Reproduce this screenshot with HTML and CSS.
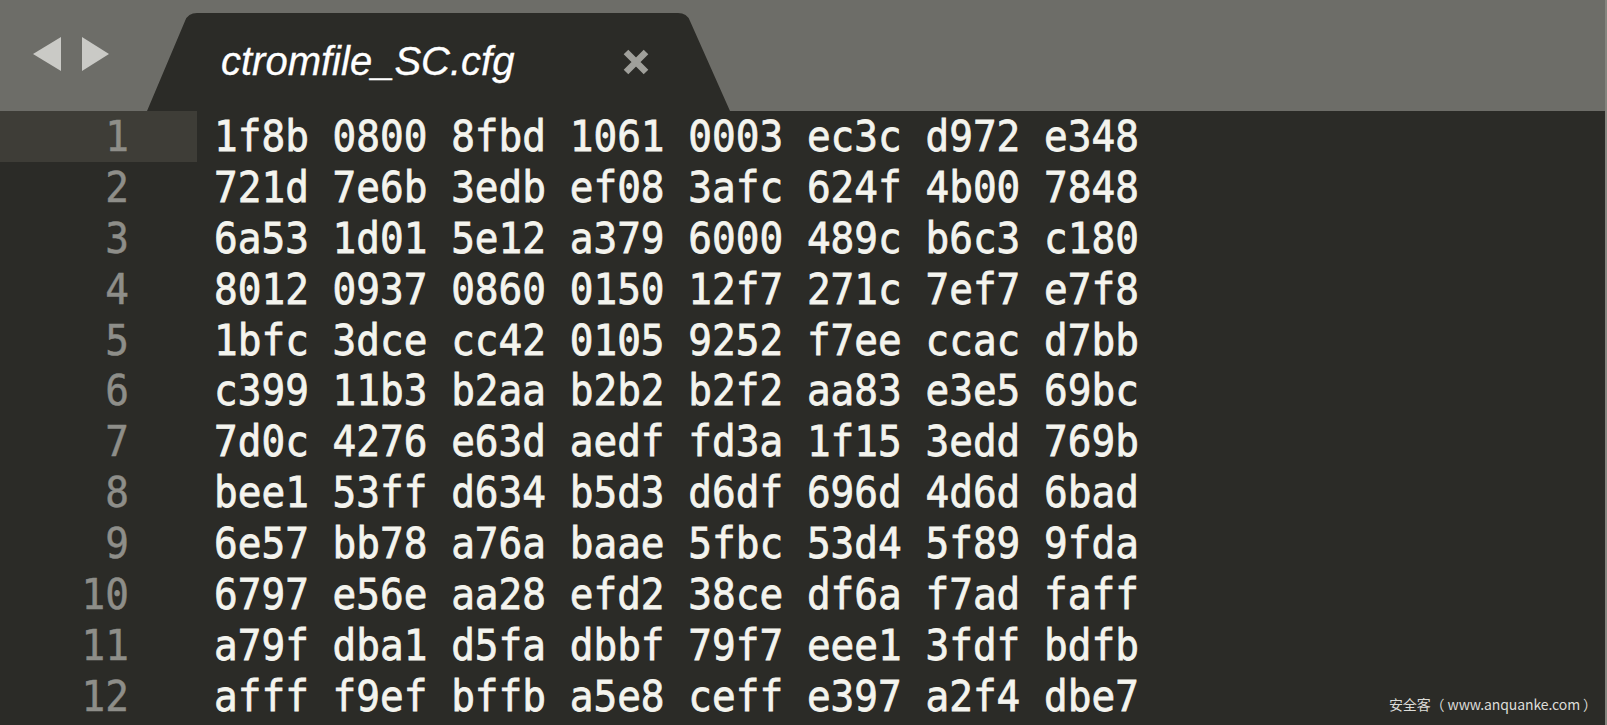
FILE: index.html
```html
<!DOCTYPE html>
<html lang="zh">
<head>
<meta charset="utf-8">
<title>ctromfile_SC.cfg</title>
<link rel="stylesheet" href="styles.css">
</head>
<body>
<div class="window">
  <header class="tabbar">
    <div class="nav">
      <svg class="arrow" width="30" height="36" viewBox="0 0 30 36"><polygon points="1,17 29,0 29,34" /></svg>
      <svg class="arrow" width="30" height="36" viewBox="0 0 30 36"><polygon points="0,0 0,34 27,17" /></svg>
    </div>
    <div class="tab">
      <span class="tab-title">ctromfile_SC.cfg</span>
      <svg class="close" width="26" height="26" viewBox="0 0 26 26"><path d="M3 3 L23 23 M23 3 L3 23" /></svg>
    </div>
  </header>
  <main class="editor">
    <div class="line"><span class="num active"><span class="txt">1</span></span><span class="code"><span class="txt">1f8b 0800 8fbd 1061 0003 ec3c d972 e348</span></span></div>
    <div class="line"><span class="num"><span class="txt">2</span></span><span class="code"><span class="txt">721d 7e6b 3edb ef08 3afc 624f 4b00 7848</span></span></div>
    <div class="line"><span class="num"><span class="txt">3</span></span><span class="code"><span class="txt">6a53 1d01 5e12 a379 6000 489c b6c3 c180</span></span></div>
    <div class="line"><span class="num"><span class="txt">4</span></span><span class="code"><span class="txt">8012 0937 0860 0150 12f7 271c 7ef7 e7f8</span></span></div>
    <div class="line"><span class="num"><span class="txt">5</span></span><span class="code"><span class="txt">1bfc 3dce cc42 0105 9252 f7ee ccac d7bb</span></span></div>
    <div class="line"><span class="num"><span class="txt">6</span></span><span class="code"><span class="txt">c399 11b3 b2aa b2b2 b2f2 aa83 e3e5 69bc</span></span></div>
    <div class="line"><span class="num"><span class="txt">7</span></span><span class="code"><span class="txt">7d0c 4276 e63d aedf fd3a 1f15 3edd 769b</span></span></div>
    <div class="line"><span class="num"><span class="txt">8</span></span><span class="code"><span class="txt">bee1 53ff d634 b5d3 d6df 696d 4d6d 6bad</span></span></div>
    <div class="line"><span class="num"><span class="txt">9</span></span><span class="code"><span class="txt">6e57 bb78 a76a baae 5fbc 53d4 5f89 9fda</span></span></div>
    <div class="line"><span class="num"><span class="txt">10</span></span><span class="code"><span class="txt">6797 e56e aa28 efd2 38ce df6a f7ad faff</span></span></div>
    <div class="line"><span class="num"><span class="txt">11</span></span><span class="code"><span class="txt">a79f dba1 d5fa dbbf 79f7 eee1 3fdf bdfb</span></span></div>
    <div class="line"><span class="num"><span class="txt">12</span></span><span class="code"><span class="txt">afff f9ef bffb a5e8 ceff e397 a2f4 dbe7</span></span></div>
  </main>
  <div class="watermark">安全客（ www.anquanke.com ）</div>
</div>
</body>
</html>
```

FILE: styles.css
```css
html, body {
  margin: 0;
  padding: 0;
  background: #2b2b27;
  overflow: hidden;
}

.window {
  position: relative;
  width: 1607px;
  height: 725px;
  background: #2b2b27;
  box-sizing: border-box;
  border-right: 2px solid #85857f;
  overflow: hidden;
}

.tabbar {
  height: 111px;
  background: #6d6d68;
  display: flex;
  align-items: flex-end;
}

.nav {
  width: 147px;
  height: 111px;
  display: flex;
  align-items: flex-start;
  padding: 37px 0 0 32px;
  box-sizing: border-box;
  gap: 20px;
}

.arrow polygon {
  fill: #cacac6;
}

.tab {
  width: 583px;
  height: 98px;
  background: #2b2b27;
  clip-path: path('M0 98 L38 8 Q41 0 50 0 L531 0 Q540 0 543 8 L583 98 Z');
  display: flex;
  align-items: flex-start;
  box-sizing: border-box;
  padding: 25px 0 0 74px;
}

.tab-title {
  font-family: "Liberation Sans", Arial, sans-serif;
  font-style: italic;
  font-size: 40px;
  line-height: 46px;
  color: #ffffff;
  letter-spacing: 0;
  -webkit-text-stroke: 0.3px #ffffff;
}

.close {
  margin-left: auto;
  margin-right: 81px;
  margin-top: 11px;
}

.close path {
  stroke: #a0a09b;
  stroke-width: 6.5;
  stroke-linecap: butt;
  fill: none;
}

.editor {
  display: flex;
  flex-direction: column;
}

.line {
  display: flex;
  height: 50.9px;
  align-items: center;
  font-family: "DejaVu Sans Mono", "Liberation Mono", monospace;
  font-size: 39.4px;
  line-height: 50.9px;
  white-space: pre;
}

.num {
  width: 197px;
  height: 50.9px;
  box-sizing: border-box;
  padding-right: 68px;
  text-align: right;
  color: #8e8e89;
  -webkit-text-stroke: 0.5px #8e8e89;
}

.num.active {
  background: #3e3d37;
}

.code {
  padding-left: 17px;
  color: #f4f4ee;
  -webkit-text-stroke: 0.7px #f4f4ee;
}

.txt {
  display: inline-block;
  transform: scaleY(1.1);
  transform-origin: 50% 52%;
}

.watermark {
  position: absolute;
  right: 8px;
  bottom: 11px;
  font-family: "Noto Sans CJK SC", "Noto Sans", sans-serif;
  font-size: 14px;
  letter-spacing: -0.1px;
  color: #dcdcd8;
}
```
